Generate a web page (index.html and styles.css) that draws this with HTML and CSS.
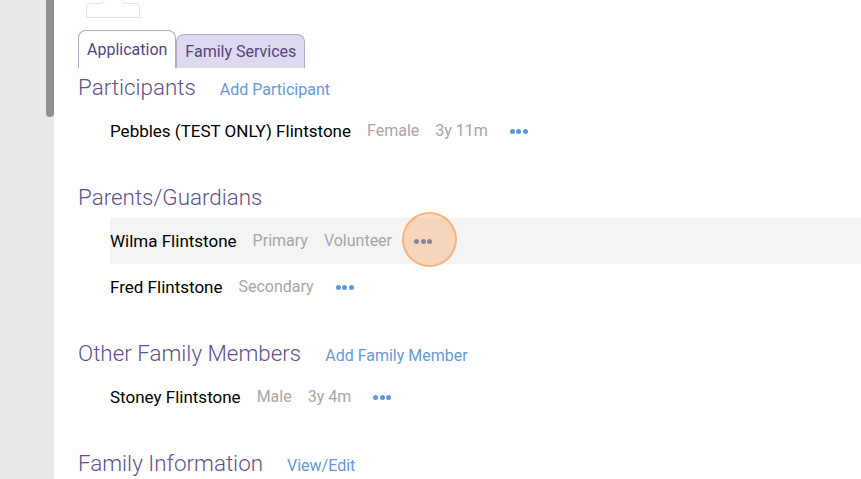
FILE: index.html
```html
<!DOCTYPE html>
<html lang="en">
<head>
<meta charset="utf-8">
<title>Family Application</title>
<link rel="stylesheet" href="styles.css">
</head>
<body>
<div class="page">
  <aside class="gutter"><div class="thumb"></div></aside>
  <main class="content">
    <div class="top">
      <svg class="avatar" width="56" height="18" viewBox="0 0 56 18" fill="none"><path d="M1.5 18V7.5Q1.5 3.5 5.5 3.5H15Q19 3.5 19.5 0M36.5 0Q37 3.5 41 3.5H50.5Q54.5 3.5 54.5 7.5V18M1.5 17.5H54.5" stroke="#e2e2ea" stroke-width="1"/></svg>
    </div>
    <nav class="tabs">
      <span class="tab active">Application</span>
      <span class="tab">Family Services</span>
    </nav>

    <section class="sec sec-participants">
      <div class="head"><h2>Participants</h2><a class="add">Add Participant</a></div>
      <div class="row"><b>Pebbles (TEST ONLY) Flintstone</b><span>Female</span><span>3y 11m</span><i class="dots"><u></u><u></u><u></u></i></div>
    </section>

    <section class="sec sec-parents">
      <div class="head"><h2>Parents/Guardians</h2></div>
      <div class="row hover"><b>Wilma Flintstone</b><span>Primary</span><span>Volunteer</span><i class="dots"><u></u><u></u><u></u><em class="spot"></em></i></div>
      <div class="row"><b>Fred Flintstone</b><span>Secondary</span><i class="dots"><u></u><u></u><u></u></i></div>
    </section>

    <section class="sec sec-other">
      <div class="head"><h2>Other Family Members</h2><a class="add">Add Family Member</a></div>
      <div class="row"><b>Stoney Flintstone</b><span>Male</span><span>3y 4m</span><i class="dots"><u></u><u></u><u></u></i></div>
    </section>

    <section class="sec sec-info">
      <div class="head"><h2>Family Information</h2><a class="add">View/Edit</a></div>
    </section>
  </main>
</div>
</body>
</html>
```
FILE: styles.css
```css
* { box-sizing: border-box; }
html, body { margin: 0; height: 100%; overflow: hidden; background: #fff; }
body { font-family: Roboto, "Liberation Sans", sans-serif; }
.page { display: flex; height: 479px; overflow: hidden; }
.gutter { width: 54px; flex: none; background: #e8e8e8; }
.thumb { width: 8px; height: 117px; margin-left: 46px; background: #909090; border-radius: 0 0 4px 4px; }
.content { flex: 1; min-width: 0; padding-left: 24px; }
.top { height: 30px; padding-left: 7px; }
.avatar { display: block; }
.tabs { display: flex; align-items: flex-end; height: 38px; }
.tab { display: block; height: 34px; padding: 7px 8px 0; font-size: 16px; line-height: 20px; color: #524482; background: #dfd9ef; border: 1px solid #b3a9cf; border-bottom: 0; border-radius: 8px 8px 0 0; }
.tab.active { height: 38px; padding: 9px 8px 0; background: #fff; }
.sec { display: block; }
.head { display: flex; align-items: baseline; gap: 24px; }
h2 { margin: 0; font-size: 22.4px; font-weight: 300; line-height: 28px; color: #5f5189; }
.add { font-size: 16px; color: #6699d8; }
.row { display: flex; align-items: center; gap: 16px; height: 46px; margin-left: 32px; font-size: 17px; }
.head + .row { margin-top: 7px; }
.row b { font-weight: 400; color: #000; }
.row span { margin-bottom: 2px; font-size: 16px; color: #a6a6a6; }
.hover { background: #f4f4f4; }
.dots { position: relative; display: flex; gap: 1.5px; margin-left: 6px; }
.dots u { position: relative; z-index: 1; display: block; width: 5px; height: 5px; border-radius: 50%; background: #5f97da; }
.hover .dots u { background: #85859a; }
.spot { position: absolute; left: -12px; top: -27px; width: 55px; height: 55px; border-radius: 50%; background: rgba(247, 165, 100, .38); border: 2px solid rgba(247, 165, 100, .7); }
.sec-participants { margin-top: 5px; }
.sec-parents { margin-top: 29px; }
.sec-other { margin-top: 29px; }
.sec-info { margin-top: 29px; }
```
